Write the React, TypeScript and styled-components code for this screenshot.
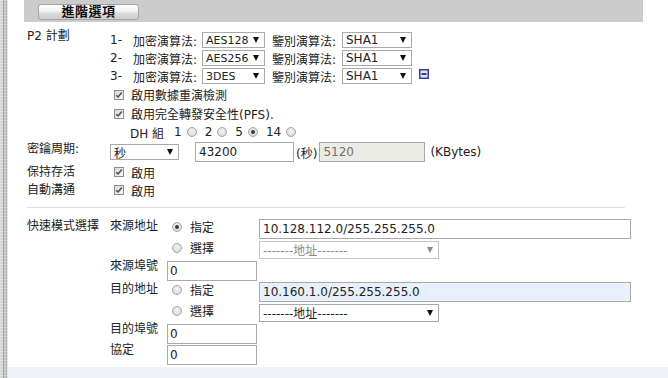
import React from "react";
import styled, { createGlobalStyle, css } from "styled-components";

const GlobalStyle = createGlobalStyle`
  html, body { margin: 0; padding: 0; background: #fff; }
  body {
    font-family: "DejaVu Sans", "Noto Sans CJK TC", sans-serif;
    font-size: 12px;
    color: #222;
  }
  * { box-sizing: border-box; }
`;

const Page = styled.div`
  display: flex;
  width: 668px;
  height: 378px;
  overflow: hidden;
`;

const SideStrip = styled.div`
  flex: 0 0 8px;
  background:
    repeating-linear-gradient(to bottom, rgba(255,255,255,0.25) 0 1px, transparent 1px 3px),
    linear-gradient(to right, #d6d6d6 0 3px, #9c9c9c 3px 4px, #c6c6c6 4px 6px, #adadad 6px 7px, #e6e6e6 7px 8px);
`;

const Main = styled.div`
  flex: 1;
  display: flex;
  flex-direction: column;
  min-width: 0;
`;

const HeaderBar = styled.div`
  flex: none;
  margin-left: 16px;
  width: 619px;
  height: 22px;
  background: #cccccc;
  display: flex;
  align-items: flex-start;
  padding: 4px 0 0 14px;
`;

const TabButton = styled.div`
  width: 101px;
  height: 16px;
  border: 1px solid #a3a3a3;
  border-radius: 3px;
  background: linear-gradient(#ffffff, #f2f2f2 45%, #dcdcdc 60%, #cdcdcd);
  font-weight: bold;
  font-size: 13px;
  line-height: 14px;
  text-align: center;
  color: #111;
  letter-spacing: 0.5px;
`;

const Content = styled.div`
  flex: 1;
  padding: 9px 0 0 19px;
  display: flex;
  flex-direction: column;
`;

const Section = styled.div<{ $mt?: number }>`
  display: grid;
  grid-template-columns: 83px auto;
  align-items: start;
  margin-top: ${(p) => p.$mt ?? 0}px;
`;

const SectionLabel = styled.div<{ $shift?: number }>`
  line-height: 18px;
  margin-top: ${(p) => -(p.$shift ?? 0)}px;
  white-space: nowrap;
`;

const Stack = styled.div`
  display: flex;
  flex-direction: column;
`;

const Line = styled.div<{ $h?: number; $indent?: number }>`
  display: flex;
  align-items: center;
  height: ${(p) => p.$h ?? 18}px;
  padding-left: ${(p) => p.$indent ?? 0}px;
  white-space: nowrap;
`;

const Index = styled.span`
  width: 23px;
  flex: none;
`;

const FieldLabel = styled.span<{ $w: number; $ml?: number }>`
  width: ${(p) => p.$w}px;
  margin-left: ${(p) => p.$ml ?? 0}px;
  flex: none;
`;

const SelectBox = styled.div<{ $w: number; $h?: number; $fs?: number; $disabled?: boolean }>`
  flex: none;
  width: ${(p) => p.$w}px;
  height: ${(p) => p.$h ?? 16}px;
  border: 1px solid ${(p) => (p.$disabled ? "#c4c4c4" : "#a9a9a9")};
  background: #fff;
  display: flex;
  align-items: center;
  justify-content: space-between;
  padding: 0 5px 0 3px;
  font-size: ${(p) => p.$fs ?? 11}px;
  color: ${(p) => (p.$disabled ? "#8a8a8a" : "#222")};
  overflow: hidden;
`;

const Arrow = styled.span<{ $disabled?: boolean }>`
  flex: none;
  width: 0;
  height: 0;
  border-left: 3px solid transparent;
  border-right: 3px solid transparent;
  border-top: 6px solid ${(p) => (p.$disabled ? "#8a8a8a" : "#111")};
`;

const MinusButton = styled.span`
  display: inline-flex;
  margin-left: 7px;
  margin-top: -4px;
`;

const CheckBoxBox = styled.span`
  flex: none;
  width: 10px;
  height: 10px;
  border: 1px solid #8f8f8f;
  background: linear-gradient(135deg, #d8d8d8, #f7f7f7);
  display: inline-flex;
  align-items: center;
  justify-content: center;
`;

const CheckText = styled.span`
  margin-left: 7px;
`;

const RadioDot = styled.span<{ $checked?: boolean; $ml?: number; $mr?: number }>`
  flex: none;
  width: 10px;
  height: 10px;
  border-radius: 50%;
  border: 1px solid #a6a6a6;
  background: radial-gradient(circle at 50% 40%, #f4f4f4, #d2d2d2);
  display: inline-flex;
  align-items: center;
  justify-content: center;
  margin-left: ${(p) => p.$ml ?? 0}px;
  margin-right: ${(p) => p.$mr ?? 0}px;
  ${(p) =>
    p.$checked &&
    css`
      &::after {
        content: "";
        width: 4px;
        height: 4px;
        border-radius: 50%;
        background: #3a3a3a;
      }
    `}
`;

const DhLabel = styled.span`
  width: 44px;
  flex: none;
`;

const TextField = styled.input<{ $w: number; $pl?: number; $tone?: "plain" | "disabled" | "filled" }>`
  flex: none;
  width: ${(p) => p.$w}px;
  height: 20px;
  margin: 0;
  border: 1px solid #a9a9a9;
  padding: 0 3px 0 ${(p) => p.$pl ?? 3}px;
  font-family: "DejaVu Sans", "Noto Sans CJK TC", sans-serif;
  font-size: 12px;
  outline: none;
  color: ${(p) => (p.$tone === "disabled" ? "#6f6f6f" : "#222")};
  background: ${(p) =>
    p.$tone === "disabled" ? "#ebebe6" : p.$tone === "filled" ? "#e8f0fc" : "#fff"};
`;

const Unit = styled.span<{ $ml?: number; $mr?: number }>`
  margin-left: ${(p) => p.$ml ?? 0}px;
  margin-right: ${(p) => p.$mr ?? 0}px;
`;

const Divider = styled.div`
  width: 598px;
  height: 1px;
  background: #dedede;
  margin-top: 8px;
`;

const SubLabel = styled.span<{ $w: number; $lh?: number }>`
  flex: none;
  width: ${(p) => p.$w}px;
  align-self: flex-start;
  line-height: ${(p) => p.$lh ?? 16}px;
`;

const RadioOption = styled.span`
  flex: none;
  width: 87px;
  align-self: flex-start;
  height: 17px;
  display: flex;
  align-items: center;
  gap: 8px;
`;

const Footer = styled.div`
  flex: none;
  height: 11px;
  background: #eff2f8;
`;

const CheckBox = () => (
  <CheckBoxBox>
    <svg width="8" height="8" viewBox="0 0 8 8">
      <path d="M1.2 4.2 L3.1 6 L6.8 1.6" fill="none" stroke="#4d4d4d" strokeWidth="1.5" />
    </svg>
  </CheckBoxBox>
);

const MinusIcon = () => (
  <MinusButton>
    <svg width="10" height="10" viewBox="0 0 10 10">
      <rect x="0.75" y="0.75" width="8.5" height="8.5" fill="#e4e7f3" stroke="#2f3f91" strokeWidth="1.5" />
      <rect x="2.5" y="4" width="5" height="2" fill="#2f3f91" />
    </svg>
  </MinusButton>
);

const Select = ({
  value,
  w,
  h,
  fs,
  disabled,
}: {
  value: string;
  w: number;
  h?: number;
  fs?: number;
  disabled?: boolean;
}) => (
  <SelectBox $w={w} $h={h} $fs={fs} $disabled={disabled}>
    <span>{value}</span>
    <Arrow $disabled={disabled} />
  </SelectBox>
);

const proposals = ["AES128", "AES256", "3DES"];

export default function App() {
  return (
    <>
      <GlobalStyle />
      <Page>
        <SideStrip />
        <Main>
          <HeaderBar>
            <TabButton>進階選項</TabButton>
          </HeaderBar>
          <Content>
            <Section>
              <SectionLabel $shift={4}>P2 計劃</SectionLabel>
              <Stack>
                {proposals.map((enc, i) => (
                  <Line key={enc}>
                    <Index>{i + 1}-</Index>
                    <FieldLabel $w={69}>加密演算法:</FieldLabel>
                    <Select value={enc} w={63} />
                    <FieldLabel $w={70} $ml={7}>鑒別演算法:</FieldLabel>
                    <Select value="SHA1" w={70} fs={12} />
                    {i === 2 && <MinusIcon />}
                  </Line>
                ))}
                <Line $h={19} $indent={4}>
                  <CheckBox />
                  <CheckText>啟用數據重演檢測</CheckText>
                </Line>
                <Line $h={19} $indent={4}>
                  <CheckBox />
                  <CheckText>啟用完全轉發安全性(PFS).</CheckText>
                </Line>
                <Line $h={18} $indent={20}>
                  <DhLabel>DH 組</DhLabel>
                  <span>1</span>
                  <RadioDot $ml={5} $mr={8} />
                  <span>2</span>
                  <RadioDot $ml={5} $mr={8} />
                  <span>5</span>
                  <RadioDot $ml={5} $mr={8} $checked />
                  <span>14</span>
                  <RadioDot $ml={5} />
                </Line>
              </Stack>
            </Section>

            <Section>
              <SectionLabel $shift={1}>密鑰周期:</SectionLabel>
              <Line $h={22}>
                <Select value="秒" w={69} fs={12} />
                <TextField $w={99} style={{ marginLeft: 16 }} value="43200" readOnly />
                <Unit $ml={2} $mr={2}>(秒)</Unit>
                <TextField $w={106} $tone="disabled" value="5120" readOnly disabled />
                <Unit $ml={5}>(KBytes)</Unit>
              </Line>
            </Section>

            <Section>
              <SectionLabel>保持存活</SectionLabel>
              <Line $indent={4}>
                <CheckBox />
                <CheckText>啟用</CheckText>
              </Line>
            </Section>
            <Section>
              <SectionLabel>自動溝通</SectionLabel>
              <Line $indent={4}>
                <CheckBox />
                <CheckText>啟用</CheckText>
              </Line>
            </Section>

            <Divider />

            <Section $mt={10}>
              <SectionLabel $shift={1}>快速模式選擇</SectionLabel>
              <Stack>
                <Line $h={21}>
                  <SubLabel $w={62}>來源地址</SubLabel>
                  <RadioOption>
                    <RadioDot $checked />
                    指定
                  </RadioOption>
                  <TextField $w={372} value="10.128.112.0/255.255.255.0" readOnly />
                </Line>
                <Line $h={21}>
                  <SubLabel $w={62} />
                  <RadioOption>
                    <RadioDot />
                    選擇
                  </RadioOption>
                  <Select value="-------地址-------" w={180} h={18} fs={12} disabled />
                </Line>
                <Line $h={21}>
                  <SubLabel $w={57} $lh={12}>來源埠號</SubLabel>
                  <TextField $w={90} $pl={2} value="0" readOnly />
                </Line>
                <Line $h={21}>
                  <SubLabel $w={62}>目的地址</SubLabel>
                  <RadioOption>
                    <RadioDot />
                    指定
                  </RadioOption>
                  <TextField $w={372} $tone="filled" value="10.160.1.0/255.255.255.0" readOnly />
                </Line>
                <Line $h={21}>
                  <SubLabel $w={62} />
                  <RadioOption>
                    <RadioDot />
                    選擇
                  </RadioOption>
                  <Select value="-------地址-------" w={180} h={18} fs={12} />
                </Line>
                <Line $h={21}>
                  <SubLabel $w={57} $lh={12}>目的埠號</SubLabel>
                  <TextField $w={90} $pl={2} value="0" readOnly />
                </Line>
                <Line $h={21}>
                  <SubLabel $w={57} $lh={12}>協定</SubLabel>
                  <TextField $w={90} $pl={2} value="0" readOnly />
                </Line>
              </Stack>
            </Section>
          </Content>
          <Footer />
        </Main>
      </Page>
    </>
  );
}
